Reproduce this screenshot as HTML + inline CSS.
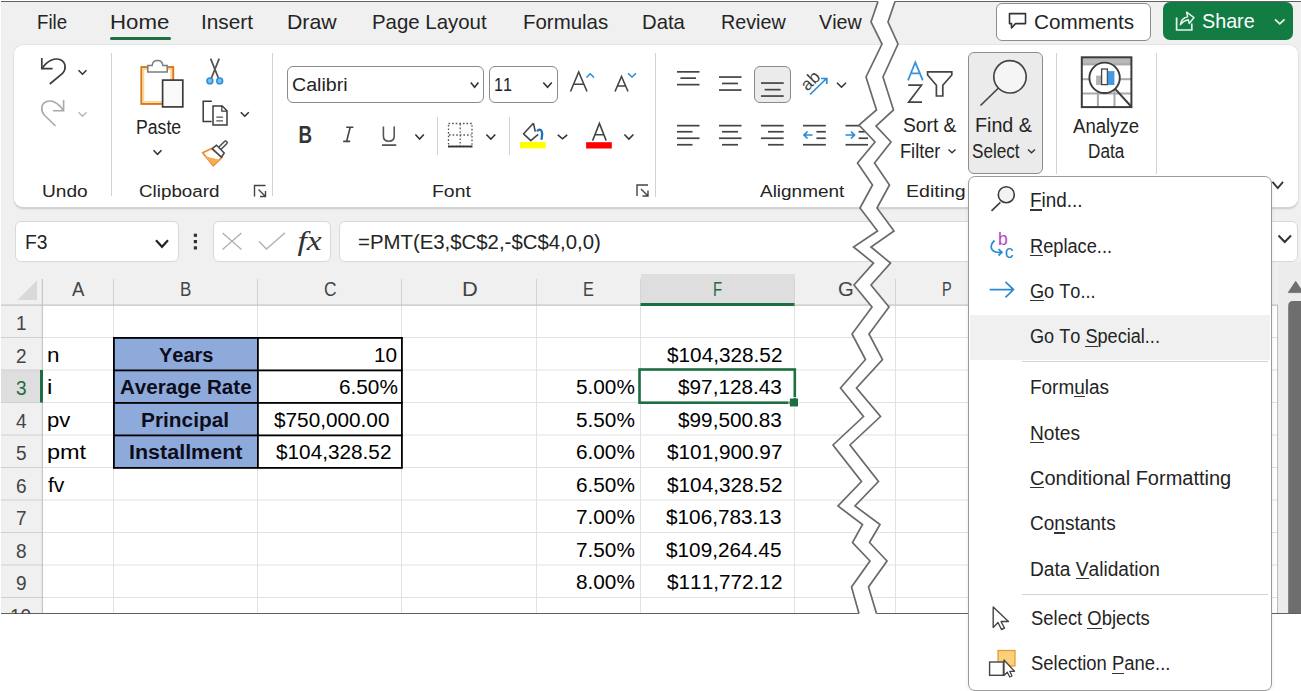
<!DOCTYPE html>
<html><head><meta charset="utf-8"><title>Excel</title><style>
html,body{margin:0;padding:0;width:1301px;height:691px;overflow:hidden;background:#fff;font-family:"Liberation Sans",sans-serif;}
.a{position:absolute;box-sizing:content-box}
.t{position:absolute;white-space:pre;transform-origin:0 0;font-kerning:none;}
svg{overflow:visible}
</style></head><body>
<div class="a" style="left:1px;top:2px;width:1300px;height:611px;background:#f0f0f0;"></div>
<div class="a" style="left:1px;top:1px;width:1300px;height:1px;background:#606060;"></div>
<div class="a" style="left:110px;top:37px;width:61px;height:3px;background:#1d6f42;border-radius:2px"></div>
<div class="a" style="left:995.5px;top:2.5px;width:153.5px;height:36.5px;border:1px solid #8d8d8d;border-radius:6px;background:#fff"></div>
<div class="a" style="left:1163px;top:2px;width:129.5px;height:38px;border-radius:7px;background:#127c42"></div>
<div class="a" style="left:13.5px;top:45px;width:1284.5px;height:162px;background:#fff;border-radius:9px;box-shadow:0 0 0 0.5px #dcdcdc,0 1.5px 2px rgba(0,0,0,.16)"></div>
<div class="a" style="left:110.5px;top:53px;width:1px;height:143px;background:#d2d2d2;"></div>
<div class="a" style="left:272px;top:53px;width:1px;height:143px;background:#d2d2d2;"></div>
<div class="a" style="left:654.5px;top:53px;width:1px;height:144px;background:#d2d2d2;"></div>
<div class="a" style="left:1055.5px;top:53px;width:1px;height:120.5px;background:#d2d2d2;"></div>
<div class="a" style="left:1155.5px;top:53px;width:1px;height:120.5px;background:#d2d2d2;"></div>
<div class="a" style="left:437px;top:117px;width:1px;height:38px;background:#d2d2d2;"></div>
<div class="a" style="left:508.5px;top:117px;width:1px;height:38px;background:#d2d2d2;"></div>
<div class="a" style="left:286.5px;top:65.5px;width:195.8px;height:35px;border:1px solid #8a8a8a;border-radius:6px;background:#fff"></div>
<div class="a" style="left:489px;top:65.5px;width:66.6px;height:35px;border:1px solid #8a8a8a;border-radius:6px;background:#fff"></div>
<div class="a" style="left:753.5px;top:65.5px;width:35.5px;height:35px;border:1px solid #8a8a8a;border-radius:6px;background:#ebebeb"></div>
<div class="a" style="left:967.5px;top:52px;width:73px;height:119.6px;border:1px solid #8d8d8d;border-radius:6px;background:#ebebeb"></div>
<div class="a" style="left:15px;top:221px;width:161.5px;height:38.5px;border:1px solid #d9d9d9;border-radius:6px;background:#fff"></div>
<div class="a" style="left:212.5px;top:221px;width:116.5px;height:38.5px;border:1px solid #d9d9d9;border-radius:6px;background:#fff"></div>
<div class="a" style="left:339px;top:221px;width:957px;height:38.5px;border:1px solid #d9d9d9;border-radius:6px;background:#fff"></div>
<div class="a" style="left:42.5px;top:305.5px;width:1235px;height:307.5px;background:#ffffff;"></div>
<div class="a" style="left:640.5px;top:274px;width:154px;height:30px;background:#dedede;"></div>
<div class="a" style="left:640.5px;top:303px;width:154px;height:3px;background:#1d6f42;"></div>
<div class="a" style="left:1px;top:370px;width:40px;height:32.5px;background:#dedede;"></div>
<div class="a" style="left:1278px;top:262px;width:23px;height:351px;background:#ececec;"></div>
<svg class="a" style="left:0;top:0" width="1301" height="691"><rect x="42" y="337.0" width="1236" height="1" fill="#e1e1e1"/><rect x="1" y="337.0" width="41" height="1" fill="#d0d0d0"/><rect x="42" y="369.5" width="1236" height="1" fill="#e1e1e1"/><rect x="1" y="369.5" width="41" height="1" fill="#d0d0d0"/><rect x="42" y="402.0" width="1236" height="1" fill="#e1e1e1"/><rect x="1" y="402.0" width="41" height="1" fill="#d0d0d0"/><rect x="42" y="434.5" width="1236" height="1" fill="#e1e1e1"/><rect x="1" y="434.5" width="41" height="1" fill="#d0d0d0"/><rect x="42" y="467.0" width="1236" height="1" fill="#e1e1e1"/><rect x="1" y="467.0" width="41" height="1" fill="#d0d0d0"/><rect x="42" y="499.5" width="1236" height="1" fill="#e1e1e1"/><rect x="1" y="499.5" width="41" height="1" fill="#d0d0d0"/><rect x="42" y="532.0" width="1236" height="1" fill="#e1e1e1"/><rect x="1" y="532.0" width="41" height="1" fill="#d0d0d0"/><rect x="42" y="564.5" width="1236" height="1" fill="#e1e1e1"/><rect x="1" y="564.5" width="41" height="1" fill="#d0d0d0"/><rect x="42" y="597.0" width="1236" height="1" fill="#e1e1e1"/><rect x="1" y="597.0" width="41" height="1" fill="#d0d0d0"/><rect x="113" y="305" width="1" height="308" fill="#e1e1e1"/><rect x="113" y="279" width="1" height="26" fill="#d4d4d4"/><rect x="257" y="305" width="1" height="308" fill="#e1e1e1"/><rect x="257" y="279" width="1" height="26" fill="#d4d4d4"/><rect x="401" y="305" width="1" height="308" fill="#e1e1e1"/><rect x="401" y="279" width="1" height="26" fill="#d4d4d4"/><rect x="536" y="305" width="1" height="308" fill="#e1e1e1"/><rect x="536" y="279" width="1" height="26" fill="#d4d4d4"/><rect x="640" y="305" width="1" height="308" fill="#e1e1e1"/><rect x="640" y="279" width="1" height="26" fill="#d4d4d4"/><rect x="794" y="305" width="1" height="308" fill="#e1e1e1"/><rect x="794" y="279" width="1" height="26" fill="#d4d4d4"/><rect x="895" y="305" width="1" height="308" fill="#e1e1e1"/><rect x="895" y="279" width="1" height="26" fill="#d4d4d4"/><rect x="1" y="304.5" width="1277" height="1.2" fill="#c4c4c4"/><rect x="41.8" y="279" width="1" height="334" fill="#bdbdbd"/><rect x="1277" y="305" width="1" height="308" fill="#bdbdbd"/><rect x="640.5" y="303" width="154" height="3" fill="#1d6f42"/><rect x="40" y="370" width="3" height="32.5" fill="#1d6f42"/><polygon points="37,280.5 37,300 17.5,300" fill="#d9d9d9"/><rect x="113" y="337.5" width="144.5" height="130" fill="#8eaadb"/><rect x="113" y="337.0" width="289.5" height="1.8" fill="#000"/><rect x="113" y="369.5" width="289.5" height="1.8" fill="#000"/><rect x="113" y="402.0" width="289.5" height="1.8" fill="#000"/><rect x="113" y="434.5" width="289.5" height="1.8" fill="#000"/><rect x="113" y="467.0" width="289.5" height="1.8" fill="#000"/><rect x="113.0" y="337" width="1.8" height="131.3" fill="#000"/><rect x="257.0" y="337" width="1.8" height="131.3" fill="#000"/><rect x="401.0" y="337" width="1.8" height="131.3" fill="#000"/><rect x="639.5" y="369.5" width="155.3" height="33.2" fill="none" stroke="#1d6f42" stroke-width="2.6"/><rect x="789.8" y="398.5" width="8.2" height="8" fill="#1d6f42"/><rect x="789" y="397.7" width="9.8" height="9.6" fill="none" stroke="#fff" stroke-width="0.8"/><polygon points="1288.2,292.6 1303.2,292.6 1295.7,281.2" fill="#6e6e6e" stroke="#6e6e6e" stroke-width="0.8" stroke-linejoin="round"/><path d="M1288.2,613 L1288.2,306 Q1288.2,301 1293,301 L1301,301 L1301,613 Z" fill="#6e6e6e"/><rect x="1" y="613" width="1300" height="1.2" fill="#606060"/></svg>
<svg class="a" style="left:0;top:0" width="1301" height="691"><path d="M41.8,58 V68.6 H52.6" fill="none" stroke="#3b3b3b" stroke-width="1.7"/><path d="M42.6,67.8 C47,60.5 55,57.5 60.5,59.8 C66,62.5 66.5,69 62.5,73.5 L49.8,84" fill="none" stroke="#3b3b3b" stroke-width="1.7"/><polyline points="78.5,70.2 82.5,74.2 86.5,70.2" fill="none" stroke="#333" stroke-width="1.6"/><path d="M63.6,100 V110.8 H53" fill="none" stroke="#a9a9a9" stroke-width="1.6"/><path d="M62.8,110 C58.5,102.5 51,99.5 46,101.8 C41,104.2 40.5,110.5 44.2,115 L55.5,126" fill="none" stroke="#a9a9a9" stroke-width="1.6"/><polyline points="78.5,112.3 82.5,116.2 86.5,112.3" fill="none" stroke="#b5b5b5" stroke-width="1.4"/><rect x="141.4" y="67.1" width="31.8" height="36.8" fill="#fff" stroke="#d9771c" stroke-width="2"/><path d="M143.3,101.8 V69 H171.2 V101.8 Z" fill="none" stroke="#fbd68c" stroke-width="1.8"/><path d="M147.8,72 V65.6 H152.2 Q152.5,60.6 157.5,60.6 Q162.6,60.6 162.8,65.6 H167.2 V72 Z" fill="#fff" stroke="#7c7c7c" stroke-width="1.5"/><rect x="162.6" y="80.1" width="20.2" height="26.8" fill="#f9f9f9" stroke="#3a3a3a" stroke-width="1.7"/><polyline points="153.5,150.3 157.5,154.3 161.5,150.3" fill="none" stroke="#333" stroke-width="1.6"/><path d="M210.6,58.6 L218.6,78.5 M219.2,58.6 L211.2,78.5" stroke="#555" stroke-width="1.8" fill="none"/><circle cx="209.9" cy="80.9" r="2.9" fill="#7cc0f0" stroke="#2d8fd8" stroke-width="1.6"/><circle cx="219.7" cy="80.9" r="2.9" fill="#7cc0f0" stroke="#2d8fd8" stroke-width="1.6"/><path d="M211.8,101.2 H203.2 V121.6 H211.6" fill="none" stroke="#3b3b3b" stroke-width="1.5"/><path d="M213,105.9 H222.2 L227,110.8 V125 H213 Z" fill="#fff" stroke="#3b3b3b" stroke-width="1.5"/><path d="M221.8,106 V111.2 H227" fill="none" stroke="#3b3b3b" stroke-width="1.2"/><path d="M216.3,117.2 H223 M216.3,120.8 H223" stroke="#555" stroke-width="1.3"/><polyline points="240.8,112.2 244.8,116.2 248.8,112.2" fill="none" stroke="#333" stroke-width="1.6"/><path d="M202.6,152.8 L211.6,148.6 L222,157.4 L213.3,165.6 Z" fill="#fff" stroke="#e8892a" stroke-width="1.7" stroke-linejoin="round"/><path d="M205,156.2 L219.6,159.8 L213.3,165.2 Z" fill="#f6ad52"/><path d="M219.5,148.6 L225.6,142.6" stroke="#4a4a4a" stroke-width="4.6" stroke-linecap="round"/><path d="M219.5,148.6 L225.6,142.6" stroke="#fff" stroke-width="1.6" stroke-linecap="round"/><path d="M212.2,148.6 L216.6,145.2 L224.2,153 L221.4,157.2 Z" fill="#fff" stroke="#4a4a4a" stroke-width="1.6" stroke-linejoin="round"/><path d="M254.5,196.5 V185.5 H265.5" fill="none" stroke="#444" stroke-width="1.4"/><path d="M258.5,189.5 L265.5,196.5 M265.5,191.0 V196.5 H260.0" fill="none" stroke="#444" stroke-width="1.4"/><path d="M637,196 V185 H648" fill="none" stroke="#444" stroke-width="1.4"/><path d="M641,189 L648,196 M648,190.5 V196 H642.5" fill="none" stroke="#444" stroke-width="1.4"/><polyline points="470.8,82.5 474.6,87.2 478.4,82.5" fill="none" stroke="#333" stroke-width="1.6"/><polyline points="543.3,82.5 547.55,87.2 551.8,82.5" fill="none" stroke="#333" stroke-width="1.6"/><text x="298.6" y="142.6" font-family="Liberation Sans" font-weight="700" font-size="23.5" fill="#333" transform="translate(298.6,0) scale(0.8,1) translate(-298.6,0)">B</text><path d="M346.2,127.2 H353.4 M343.2,141.4 H350.2 M350.2,127.2 L346.6,141.4" stroke="#444" stroke-width="1.6" fill="none"/><path d="M383.4,126.4 V136 Q383.4,141.2 388.8,141.2 Q394.2,141.2 394.2,136 V126.4" fill="none" stroke="#555" stroke-width="1.6"/><rect x="382" y="144.3" width="14.3" height="1.6" fill="#444"/><polyline points="415.4,134.5 419.6,139 423.8,134.5" fill="none" stroke="#333" stroke-width="1.6"/><rect x="448.5" y="123.5" width="23.5" height="23" fill="none" stroke="#555" stroke-width="1.3" stroke-dasharray="1.6 2"/><path d="M460.2,124 V146 M449,135 H471.5" stroke="#555" stroke-width="1.3" stroke-dasharray="1.6 2"/><rect x="448" y="145.6" width="24.5" height="1.8" fill="#333"/><polyline points="486.4,134.5 490.85,139 495.3,134.5" fill="none" stroke="#333" stroke-width="1.6"/><path d="M533.4,123.3 L523.6,133.8 L530.8,140.6 L538.2,134.4" fill="#fff" stroke="#444" stroke-width="1.6" stroke-linejoin="round"/><path d="M533.4,123.3 L535.3,131.6" stroke="#444" stroke-width="1.6"/><path d="M537.6,130.6 Q541.5,127.6 542.2,134 L541.6,138.8" fill="none" stroke="#1f6fbf" stroke-width="2.3" stroke-linecap="round"/><rect x="520" y="142" width="25.7" height="6.4" fill="#ffff00"/><polyline points="557.8,134.8 562.5,138.8 567.2,134.8" fill="none" stroke="#333" stroke-width="1.6"/><path d="M592.6,140.6 L599.4,123.4 L606.2,140.6 M595.4,134.8 H603.4" fill="none" stroke="#444" stroke-width="1.6"/><rect x="586.1" y="142.2" width="25.7" height="6.3" fill="#ff0000"/><polyline points="624.4,134.5 628.9,139 633.4,134.5" fill="none" stroke="#333" stroke-width="1.6"/><path d="M570.5,91.5 L578.7,72 L587,91.5 M573.6,84.3 H584" fill="none" stroke="#444" stroke-width="1.6"/><path d="M586.5,77.5 L590.2,73.8 L594,77.5" fill="none" stroke="#2a8ad4" stroke-width="1.5"/><path d="M615,91.5 L621.5,76.5 L628,91.5 M617.5,86 H625.5" fill="none" stroke="#444" stroke-width="1.6"/><path d="M628,73.2 L632,77 L636,73.2" fill="none" stroke="#2a8ad4" stroke-width="1.5"/><rect x="677" y="71.0" width="22.5" height="1.7" fill="#444"/><rect x="680.4" y="77.3" width="15.600000000000023" height="1.7" fill="#444"/><rect x="677" y="83.8" width="22.5" height="1.7" fill="#444"/><rect x="719" y="76.2" width="22.5" height="1.7" fill="#444"/><rect x="722" y="82.60000000000001" width="16" height="1.7" fill="#444"/><rect x="719" y="89.2" width="22.5" height="1.7" fill="#444"/><rect x="761" y="82.2" width="22.700000000000045" height="1.7" fill="#444"/><rect x="764.6" y="88.8" width="16.0" height="1.7" fill="#444"/><rect x="761" y="95.2" width="22.700000000000045" height="1.7" fill="#444"/><rect x="677" y="124.8" width="22.5" height="1.7" fill="#444"/><rect x="677" y="130.89999999999998" width="15.5" height="1.7" fill="#444"/><rect x="677" y="137.39999999999998" width="22.5" height="1.7" fill="#444"/><rect x="677" y="143.89999999999998" width="15.5" height="1.7" fill="#444"/><rect x="719" y="124.8" width="22.5" height="1.7" fill="#444"/><rect x="722" y="130.89999999999998" width="16" height="1.7" fill="#444"/><rect x="719" y="137.39999999999998" width="22.5" height="1.7" fill="#444"/><rect x="722" y="143.89999999999998" width="16" height="1.7" fill="#444"/><rect x="761" y="124.8" width="22.700000000000045" height="1.7" fill="#444"/><rect x="768" y="130.89999999999998" width="15.700000000000045" height="1.7" fill="#444"/><rect x="761" y="137.39999999999998" width="22.700000000000045" height="1.7" fill="#444"/><rect x="768" y="143.89999999999998" width="15.700000000000045" height="1.7" fill="#444"/><rect x="803" y="124.8" width="22.799999999999955" height="1.7" fill="#444"/><rect x="803" y="143.89999999999998" width="22.799999999999955" height="1.7" fill="#444"/><rect x="816.4" y="130.89999999999998" width="9.399999999999977" height="1.7" fill="#444"/><rect x="816.4" y="137.39999999999998" width="9.399999999999977" height="1.7" fill="#444"/><path d="M812.5,135 H804 M807.5,131.5 L804,135 L807.5,138.5" fill="none" stroke="#2a8ad4" stroke-width="1.7"/><rect x="845.5" y="124.8" width="22.5" height="1.7" fill="#444"/><rect x="845.5" y="143.89999999999998" width="22.5" height="1.7" fill="#444"/><rect x="858.6" y="130.89999999999998" width="9.399999999999977" height="1.7" fill="#444"/><rect x="858.6" y="137.39999999999998" width="9.399999999999977" height="1.7" fill="#444"/><path d="M845.5,135 H854.5 M851,131.5 L854.5,135 L851,138.5" fill="none" stroke="#2a8ad4" stroke-width="1.7"/><g transform="translate(810,80) rotate(-45)"><text x="-10" y="6.5" font-family="Liberation Sans" font-size="17.5" fill="#444">ab</text></g><path d="M810,94.5 L826.5,78.5 M821,78.5 H826.8 V84" fill="none" stroke="#2a8ad4" stroke-width="1.7"/><polyline points="837,82.8 841.5,87.2 846,82.8" fill="none" stroke="#333" stroke-width="1.6"/><path d="M908,80.3 L915.3,62.3 L922.8,80.3 M910.9,73.4 H919.8" fill="none" stroke="#3b93dc" stroke-width="1.8"/><path d="M908.2,85.2 H921.5 L908.6,102.2 H922" fill="none" stroke="#444" stroke-width="1.7"/><path d="M927.6,71.8 H951.8 V75 L942.8,85.2 V96 H936.4 V85.2 L927.6,75 Z" fill="#fff" stroke="#444" stroke-width="1.7" stroke-linejoin="miter"/><polyline points="948.5,149.6 952.0,152.8 955.5,149.6" fill="none" stroke="#333" stroke-width="1.4"/><circle cx="1010" cy="76.8" r="16.2" fill="#f5f5f5" stroke="#444" stroke-width="1.7"/><path d="M980.5,105.5 L998.5,88" stroke="#444" stroke-width="1.7"/><polyline points="1028,149.6 1031.5,152.8 1035,149.6" fill="none" stroke="#333" stroke-width="1.4"/><rect x="1082" y="57.5" width="49" height="49.5" fill="#fff"/><rect x="1082" y="57.5" width="49" height="7" fill="#b9b9b9"/><rect x="1082" y="63.400000000000006" width="49" height="2" fill="#a9a9a9"/><rect x="1082" y="78.2" width="49" height="2" fill="#a9a9a9"/><rect x="1082" y="92.5" width="49" height="2" fill="#a9a9a9"/><rect x="1096.9" y="64.5" width="2" height="42.5" fill="#a9a9a9"/><rect x="1113.5" y="64.5" width="2" height="42.5" fill="#a9a9a9"/><rect x="1081.8" y="57.3" width="49.6" height="49.8" fill="none" stroke="#3c3c3c" stroke-width="2"/><circle cx="1104.6" cy="77.8" r="15.2" fill="#fff" stroke="#3c3c3c" stroke-width="1.9"/><path d="M1115.4,89.2 L1131.6,107" stroke="#3c3c3c" stroke-width="2"/><rect x="1096.1" y="75.6" width="4.9" height="9.4" fill="#b3b3b3"/><rect x="1101.6" y="69" width="5.8" height="15.6" fill="#fff" stroke="#444" stroke-width="1.3"/><rect x="1107.8" y="71.1" width="6.6" height="13.9" fill="#4599e3"/><polyline points="1272.5,181.8 1277.75,188 1283,181.8" fill="none" stroke="#333" stroke-width="1.8"/><path d="M1009.5,13.6 H1025.5 V23.6 H1015.5 L1011.5,28 V23.6 H1009.5 Z" fill="none" stroke="#333" stroke-width="1.6" stroke-linejoin="round"/><path d="M1176.6,17.6 V30 H1191.8 V23.6" fill="none" stroke="#e8f3ec" stroke-width="1.7"/><path d="M1180.4,24.6 Q1181,18.6 1187.6,16.8 L1186.6,12.2 L1194,17.6 L1189.2,23.4 L1188.4,19.8 Q1183.4,20.8 1180.4,24.6 Z" fill="none" stroke="#e8f3ec" stroke-width="1.5" stroke-linejoin="round"/><polyline points="1275,19.3 1279.75,23.8 1284.5,19.3" fill="none" stroke="#e8f3ec" stroke-width="1.8"/><polyline points="156,240.3 162.0,246.8 168,240.3" fill="none" stroke="#222" stroke-width="2.2"/><rect x="193.8" y="233.7" width="3.2" height="3.2" fill="#333"/><rect x="193.8" y="240.0" width="3.2" height="3.2" fill="#333"/><rect x="193.8" y="246.3" width="3.2" height="3.2" fill="#333"/><path d="M222.5,233 L241.5,249.5 M241.5,233 L222.5,249.5" stroke="#b3b3b3" stroke-width="1.5"/><path d="M259,241.5 L266.5,249 L285,232.8" fill="none" stroke="#b3b3b3" stroke-width="1.5"/><text x="297.5" y="250.5" font-family="Liberation Serif" font-style="italic" font-size="28" fill="#333" transform="translate(297.5,250) scale(1.2,1) translate(-297.5,-250)">fx</text><polyline points="1278.5,235.5 1284.75,242 1291,235.5" fill="none" stroke="#333" stroke-width="2"/></svg>
<span class="t" style="left:36.58px;top:11.61px;font-size:20.3px;line-height:20.3px;color:#242424;transform:scaleX(0.9204);">File</span>
<span class="t" style="left:109.70px;top:11.61px;font-size:20.3px;line-height:20.3px;color:#242424;transform:scaleX(1.0962);">Home</span>
<span class="t" style="left:201.48px;top:11.61px;font-size:20.3px;line-height:20.3px;color:#242424;transform:scaleX(1.0242);">Insert</span>
<span class="t" style="left:286.95px;top:11.61px;font-size:20.3px;line-height:20.3px;color:#242424;transform:scaleX(1.0497);">Draw</span>
<span class="t" style="left:371.99px;top:11.61px;font-size:20.3px;line-height:20.3px;color:#242424;transform:scaleX(1.0065);">Page Layout</span>
<span class="t" style="left:522.99px;top:11.61px;font-size:20.3px;line-height:20.3px;color:#242424;transform:scaleX(1.0074);">Formulas</span>
<span class="t" style="left:642.00px;top:11.61px;font-size:20.3px;line-height:20.3px;color:#242424;">Data</span>
<span class="t" style="left:720.53px;top:11.61px;font-size:20.3px;line-height:20.3px;color:#242424;transform:scaleX(0.9719);">Review</span>
<span class="t" style="left:818.50px;top:11.61px;font-size:20.3px;line-height:20.3px;color:#242424;transform:scaleX(0.9704);">View</span>
<span class="t" style="left:1033.58px;top:11.71px;font-size:20.3px;line-height:20.3px;color:#242424;transform:scaleX(1.0206);">Comments</span>
<span class="t" style="left:1202.00px;top:11.41px;font-size:20.3px;line-height:20.3px;color:#ffffff;transform:scaleX(0.9733);">Share</span>
<span class="t" style="left:136.02px;top:117.07px;font-size:20.0px;line-height:20.0px;color:#242424;transform:scaleX(0.8817);">Paste</span>
<span class="t" style="left:902.70px;top:115.37px;font-size:20.0px;line-height:20.0px;color:#242424;transform:scaleX(0.9602);">Sort &amp;</span>
<span class="t" style="left:899.79px;top:140.67px;font-size:20.0px;line-height:20.0px;color:#242424;transform:scaleX(0.9090);">Filter</span>
<span class="t" style="left:975.02px;top:115.37px;font-size:20.0px;line-height:20.0px;color:#242424;transform:scaleX(0.9850);">Find &amp;</span>
<span class="t" style="left:971.50px;top:140.67px;font-size:20.0px;line-height:20.0px;color:#242424;transform:scaleX(0.8567);">Select</span>
<span class="t" style="left:1072.80px;top:115.57px;font-size:20.0px;line-height:20.0px;color:#242424;transform:scaleX(0.9306);">Analyze</span>
<span class="t" style="left:1088.04px;top:140.97px;font-size:20.0px;line-height:20.0px;color:#242424;transform:scaleX(0.8570);">Data</span>
<span class="t" style="left:41.88px;top:183.12px;font-size:17.1px;line-height:17.1px;color:#242424;transform:scaleX(1.1179);">Undo</span>
<span class="t" style="left:138.50px;top:183.12px;font-size:17.1px;line-height:17.1px;color:#242424;transform:scaleX(1.0997);">Clipboard</span>
<span class="t" style="left:431.86px;top:183.12px;font-size:17.1px;line-height:17.1px;color:#242424;transform:scaleX(1.1359);">Font</span>
<span class="t" style="left:760.20px;top:183.12px;font-size:17.1px;line-height:17.1px;color:#242424;transform:scaleX(1.1093);">Alignment</span>
<span class="t" style="left:905.86px;top:183.12px;font-size:17.1px;line-height:17.1px;color:#242424;transform:scaleX(1.1426);">Editing</span>
<span class="t" style="left:291.70px;top:74.54px;font-size:19.2px;line-height:19.2px;color:#242424;transform:scaleX(1.0223);">Calibri</span>
<span class="t" style="left:493.86px;top:74.54px;font-size:19.2px;line-height:19.2px;color:#242424;transform:scaleX(0.8388);">11</span>
<span class="t" style="left:25.02px;top:233.10px;font-size:19.6px;line-height:19.6px;color:#242424;transform:scaleX(0.9832);">F3</span>
<span class="t" style="left:358.10px;top:232.80px;font-size:19.6px;line-height:19.6px;color:#242424;transform:scaleX(1.0396);">=PMT(E3,$C$2,-$C$4,0,0)</span>
<span class="t" style="left:72.30px;top:279.37px;font-size:20.0px;line-height:20.0px;color:#444444;transform:scaleX(0.9286);">A</span>
<span class="t" style="left:179.95px;top:279.37px;font-size:20.0px;line-height:20.0px;color:#444444;transform:scaleX(0.8500);">B</span>
<span class="t" style="left:323.53px;top:279.37px;font-size:20.0px;line-height:20.0px;color:#444444;transform:scaleX(0.8692);">C</span>
<span class="t" style="left:461.51px;top:279.37px;font-size:20.0px;line-height:20.0px;color:#444444;transform:scaleX(1.0923);">D</span>
<span class="t" style="left:583.18px;top:279.37px;font-size:20.0px;line-height:20.0px;color:#444444;transform:scaleX(0.8167);">E</span>
<span class="t" style="left:838.29px;top:279.37px;font-size:20.0px;line-height:20.0px;color:#444444;transform:scaleX(1.0143);">G</span>
<span class="t" style="left:941.77px;top:279.37px;font-size:20.0px;line-height:20.0px;color:#444444;transform:scaleX(0.7250);">P</span>
<span class="t" style="left:713.05px;top:279.37px;font-size:20.0px;line-height:20.0px;color:#1e6b41;transform:scaleX(0.7455);">F</span>
<span class="t" style="left:15.50px;top:313.27px;font-size:20.0px;line-height:20.0px;color:#444444;transform:scaleX(0.9500);">1</span>
<span class="t" style="left:15.50px;top:345.77px;font-size:20.0px;line-height:20.0px;color:#444444;transform:scaleX(0.9500);">2</span>
<span class="t" style="left:15.97px;top:378.27px;font-size:20.0px;line-height:20.0px;color:#1e6b41;transform:scaleX(0.9500);">3</span>
<span class="t" style="left:15.97px;top:410.77px;font-size:20.0px;line-height:20.0px;color:#444444;transform:scaleX(0.9500);">4</span>
<span class="t" style="left:15.97px;top:443.27px;font-size:20.0px;line-height:20.0px;color:#444444;transform:scaleX(0.9500);">5</span>
<span class="t" style="left:15.50px;top:475.77px;font-size:20.0px;line-height:20.0px;color:#444444;transform:scaleX(0.9500);">6</span>
<span class="t" style="left:15.50px;top:508.27px;font-size:20.0px;line-height:20.0px;color:#444444;transform:scaleX(0.9500);">7</span>
<span class="t" style="left:15.97px;top:540.77px;font-size:20.0px;line-height:20.0px;color:#444444;transform:scaleX(0.9500);">8</span>
<span class="t" style="left:15.97px;top:573.27px;font-size:20.0px;line-height:20.0px;color:#444444;transform:scaleX(0.9500);">9</span>
<span class="t" style="left:10.22px;top:605.77px;font-size:20.0px;line-height:20.0px;color:#444444;transform:scaleX(0.9500);">10</span>
<span class="t" style="left:46.66px;top:345.90px;font-size:19.6px;line-height:19.6px;color:#000000;transform:scaleX(1.1444);">n</span>
<span class="t" style="left:46.57px;top:378.40px;font-size:19.6px;line-height:19.6px;color:#000000;transform:scaleX(1.2333);">i</span>
<span class="t" style="left:46.67px;top:410.90px;font-size:19.6px;line-height:19.6px;color:#000000;transform:scaleX(1.1258);">pv</span>
<span class="t" style="left:46.60px;top:443.40px;font-size:19.6px;line-height:19.6px;color:#000000;transform:scaleX(1.1981);">pmt</span>
<span class="t" style="left:47.80px;top:475.90px;font-size:19.6px;line-height:19.6px;color:#000000;transform:scaleX(1.0749);">fv</span>
<span class="t" style="left:158.50px;top:345.90px;font-size:19.6px;line-height:19.6px;color:#0d0d1a;font-weight:700;transform:scaleX(1.0208);">Years</span>
<span class="t" style="left:119.50px;top:378.40px;font-size:19.6px;line-height:19.6px;color:#0d0d1a;font-weight:700;transform:scaleX(1.0507);">Average Rate</span>
<span class="t" style="left:140.94px;top:410.90px;font-size:19.6px;line-height:19.6px;color:#0d0d1a;font-weight:700;transform:scaleX(1.0638);">Principal</span>
<span class="t" style="left:128.70px;top:443.40px;font-size:19.6px;line-height:19.6px;color:#0d0d1a;font-weight:700;transform:scaleX(1.0971);">Installment</span>
<span class="t" style="left:373.60px;top:345.90px;font-size:19.6px;line-height:19.6px;color:#000000;transform:scaleX(1.0596);">10</span>
<span class="t" style="left:338.58px;top:378.40px;font-size:19.6px;line-height:19.6px;color:#000000;transform:scaleX(1.0596);">6.50%</span>
<span class="t" style="left:274.44px;top:410.90px;font-size:19.6px;line-height:19.6px;color:#000000;transform:scaleX(1.0596);">$750,000.00</span>
<span class="t" style="left:275.50px;top:443.40px;font-size:19.6px;line-height:19.6px;color:#000000;transform:scaleX(1.0596);">$104,328.52</span>
<span class="t" style="left:575.98px;top:378.40px;font-size:19.6px;line-height:19.6px;color:#000000;transform:scaleX(1.0596);">5.00%</span>
<span class="t" style="left:575.98px;top:410.90px;font-size:19.6px;line-height:19.6px;color:#000000;transform:scaleX(1.0596);">5.50%</span>
<span class="t" style="left:575.98px;top:443.40px;font-size:19.6px;line-height:19.6px;color:#000000;transform:scaleX(1.0596);">6.00%</span>
<span class="t" style="left:575.98px;top:475.90px;font-size:19.6px;line-height:19.6px;color:#000000;transform:scaleX(1.0596);">6.50%</span>
<span class="t" style="left:575.98px;top:508.40px;font-size:19.6px;line-height:19.6px;color:#000000;transform:scaleX(1.0596);">7.00%</span>
<span class="t" style="left:575.98px;top:540.90px;font-size:19.6px;line-height:19.6px;color:#000000;transform:scaleX(1.0596);">7.50%</span>
<span class="t" style="left:575.98px;top:573.40px;font-size:19.6px;line-height:19.6px;color:#000000;transform:scaleX(1.0596);">8.00%</span>
<span class="t" style="left:667.30px;top:345.90px;font-size:19.6px;line-height:19.6px;color:#000000;transform:scaleX(1.0596);">$104,328.52</span>
<span class="t" style="left:677.79px;top:378.40px;font-size:19.6px;line-height:19.6px;color:#000000;transform:scaleX(1.0596);">$97,128.43</span>
<span class="t" style="left:677.79px;top:410.90px;font-size:19.6px;line-height:19.6px;color:#000000;transform:scaleX(1.0596);">$99,500.83</span>
<span class="t" style="left:667.30px;top:443.40px;font-size:19.6px;line-height:19.6px;color:#000000;transform:scaleX(1.0596);">$101,900.97</span>
<span class="t" style="left:667.30px;top:475.90px;font-size:19.6px;line-height:19.6px;color:#000000;transform:scaleX(1.0596);">$104,328.52</span>
<span class="t" style="left:666.24px;top:508.40px;font-size:19.6px;line-height:19.6px;color:#000000;transform:scaleX(1.0596);">$106,783.13</span>
<span class="t" style="left:666.24px;top:540.90px;font-size:19.6px;line-height:19.6px;color:#000000;transform:scaleX(1.0596);">$109,264.45</span>
<span class="t" style="left:667.30px;top:573.40px;font-size:19.6px;line-height:19.6px;color:#000000;transform:scaleX(1.0596);">$111,772.12</span>
<svg class="a" style="left:0;top:0" width="1301" height="691"><polygon points="878.6,-1 878,1.5 871,22 882,44 866,77 876.5,110 859,125 875,142 857.5,163 872.5,185 860,208 877.5,231 853.5,247 873.5,263 854,285 872,307 852,334 865.5,359.5 840.5,388 863.5,416.5 833,445 861.5,481.5 838,506 862.5,524.5 852.5,542.5 870,561 851.5,587 859,613.5 859,616 876.5,616 876.5,613.5 868.5,587 887,561 869.5,542.5 880,524.5 855,506 878.5,481.5 850,445 880.5,416.5 856.5,388 882.5,359.5 869,334 889,307 871,285 890.5,263 871,247 894,231 877,208 889.5,185 874.5,163 891,142 876,126 893.5,110 883,77 898,44 888,22 895,1.5 895.6,-1" fill="#fff"/><polyline points="878,1.5 871,22 882,44 866,77 876.5,110 859,125 875,142 857.5,163 872.5,185 860,208 877.5,231 853.5,247 873.5,263 854,285 872,307 852,334 865.5,359.5 840.5,388 863.5,416.5 833,445 861.5,481.5 838,506 862.5,524.5 852.5,542.5 870,561 851.5,587 859,613.5" fill="none" stroke="#6a6a6a" stroke-width="1.7" stroke-linejoin="miter"/><polyline points="895,1.5 888,22 898,44 883,77 893.5,110 876,126 891,142 874.5,163 889.5,185 877,208 894,231 871,247 890.5,263 871,285 889,307 869,334 882.5,359.5 856.5,388 880.5,416.5 850,445 878.5,481.5 855,506 880,524.5 869.5,542.5 887,561 868.5,587 876.5,613.5" fill="none" stroke="#6a6a6a" stroke-width="1.7" stroke-linejoin="miter"/></svg>
<div class="a" style="left:0px;top:614.2px;width:1301px;height:77px;background:#ffffff;"></div>
<div class="a" style="left:968px;top:176px;width:302px;height:512.5px;border:1px solid #9b9b9b;border-radius:7px;background:#fff;box-shadow:0 2px 4px rgba(0,0,0,.08)"></div>
<div class="a" style="left:969.5px;top:314.5px;width:300px;height:45px;background:#f0f0f0;"></div>
<div class="a" style="left:1022px;top:361px;width:246px;height:1.2px;background:#d3d3d3;"></div>
<div class="a" style="left:1022px;top:593.5px;width:246px;height:1.2px;background:#d3d3d3;"></div>
<svg class="a" style="left:0;top:0" width="1301" height="691"><circle cx="1006.3" cy="194.7" r="8" fill="#f3f3f3" stroke="#3a3a3a" stroke-width="1.6"/><path d="M991.5,210.8 L1000.4,202.3" stroke="#3a3a3a" stroke-width="1.6"/><text x="998" y="244.8" font-family="Liberation Sans" font-size="17.5" fill="#b146c2">b</text><text x="1004.8" y="257.6" font-family="Liberation Sans" font-size="17.5" fill="#2b8ad1">c</text><path d="M994.5,240.5 Q989.5,245 992,249.5 Q994.5,253 1001.5,252.3 M998.5,249 L1002,252.3 L998.5,255.5" fill="none" stroke="#2b8ad1" stroke-width="1.7"/><path d="M989.7,289.6 H1013.5 M1005.5,281.8 L1013.5,289.6 L1005.5,297.4" fill="none" stroke="#2b8ad1" stroke-width="1.7"/><path d="M993.2,607 V627.5 L998,622.5 L1001.5,629.5 L1004.5,628 L1001,621.5 L1008.5,621.5 Z" fill="#fff" stroke="#444" stroke-width="1.4" stroke-linejoin="round"/><rect x="998" y="650.5" width="17" height="15.5" fill="#fad07a" stroke="#e8952c" stroke-width="1.2"/><rect x="989.6" y="662" width="13.8" height="13.3" fill="#fff" stroke="#444" stroke-width="1.4"/><path d="M1004,660 V675.5 L1007.3,672.3 L1009.8,677 L1012,676 L1009.8,671.3 L1014.5,671.3 Z" fill="#fff" stroke="#444" stroke-width="1.3" stroke-linejoin="round"/></svg>
<span class="t" style="left:1030.06px;top:190.17px;font-size:20.0px;line-height:20.0px;color:#242424;transform:scaleX(0.9430);">Find...</span>
<span class="t" style="left:1030.09px;top:235.57px;font-size:20.0px;line-height:20.0px;color:#242424;transform:scaleX(0.9109);">Replace...</span>
<span class="t" style="left:1030.09px;top:280.97px;font-size:20.0px;line-height:20.0px;color:#242424;transform:scaleX(0.9069);">Go To...</span>
<span class="t" style="left:1030.09px;top:326.37px;font-size:20.0px;line-height:20.0px;color:#242424;transform:scaleX(0.9060);">Go To Special...</span>
<span class="t" style="left:1030.05px;top:376.97px;font-size:20.0px;line-height:20.0px;color:#242424;transform:scaleX(0.9472);">Formulas</span>
<span class="t" style="left:1030.04px;top:422.57px;font-size:20.0px;line-height:20.0px;color:#242424;transform:scaleX(0.9562);">Notes</span>
<span class="t" style="left:1030.00px;top:467.77px;font-size:20.0px;line-height:20.0px;color:#242424;">Conditional Formatting</span>
<span class="t" style="left:1030.05px;top:513.27px;font-size:20.0px;line-height:20.0px;color:#242424;transform:scaleX(0.9512);">Constants</span>
<span class="t" style="left:1030.04px;top:558.97px;font-size:20.0px;line-height:20.0px;color:#242424;transform:scaleX(0.9571);">Data Validation</span>
<span class="t" style="left:1031.00px;top:608.37px;font-size:20.0px;line-height:20.0px;color:#242424;transform:scaleX(0.9213);">Select Objects</span>
<span class="t" style="left:1031.00px;top:653.47px;font-size:20.0px;line-height:20.0px;color:#242424;transform:scaleX(0.9221);">Selection Pane...</span>
<div class="a" style="left:1030.06px;top:209.30px;width:11.52px;height:1.3px;background:#333"></div>
<div class="a" style="left:1030.09px;top:254.70px;width:13.16px;height:1.3px;background:#333"></div>
<div class="a" style="left:1030.09px;top:300.10px;width:14.11px;height:1.3px;background:#333"></div>
<div class="a" style="left:1085.48px;top:345.50px;width:12.09px;height:1.3px;background:#333"></div>
<div class="a" style="left:1074.25px;top:396.10px;width:10.54px;height:1.3px;background:#333"></div>
<div class="a" style="left:1030.04px;top:441.70px;width:13.81px;height:1.3px;background:#333"></div>
<div class="a" style="left:1030.00px;top:486.90px;width:14.42px;height:1.3px;background:#333"></div>
<div class="a" style="left:1054.37px;top:532.40px;width:10.58px;height:1.3px;background:#333"></div>
<div class="a" style="left:1075.80px;top:578.10px;width:12.77px;height:1.3px;background:#333"></div>
<div class="a" style="left:1087.33px;top:627.50px;width:14.33px;height:1.3px;background:#333"></div>
<div class="a" style="left:1111.99px;top:672.60px;width:12.30px;height:1.3px;background:#333"></div>
</body></html>
